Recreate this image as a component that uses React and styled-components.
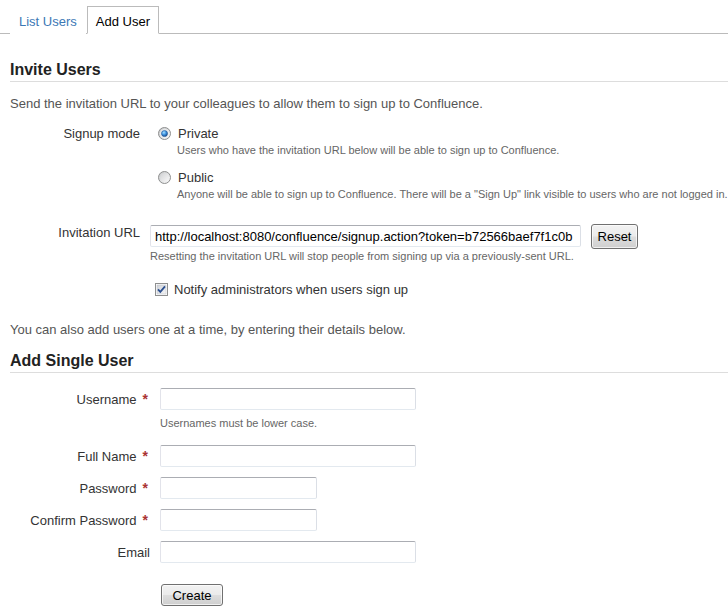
import React, { useId } from 'react';
import styled, { createGlobalStyle } from 'styled-components';

const Global = createGlobalStyle`
  html, body { margin: 0; padding: 0; background: #fff; }
  body {
    font-family: "Liberation Sans", Arial, sans-serif;
    font-size: 13px;
    color: #333;
  }
`;

const Page = styled.div`
  width: 728px;
`;

const TabBar = styled.div`
  display: flex;
  align-items: flex-end;
  padding: 6px 0 0 10px;
  border-bottom: 1px solid #bbb;
`;

const Tab = styled.a`
  display: block;
  box-sizing: border-box;
  height: 28px;
  padding: 3px 8px 0;
  margin-bottom: -1px;
  margin-left: ${p => (p.$active ? '1px' : '0')};
  line-height: 23px;
  font-size: 13px;
  text-decoration: none;
  background: #fff;
  border: 1px solid ${p => (p.$active ? '#bbb' : 'transparent')};
  border-bottom-color: ${p => (p.$active ? '#fff' : 'transparent')};
  color: ${p => (p.$active ? '#000' : '#3c78b5')};
  cursor: pointer;
`;

const Content = styled.div`
  padding-left: 10px;
`;

const Heading = styled.h2`
  margin: ${p => p.$top}px 0 0;
  padding: 0 0 1px;
  font-size: 16px;
  line-height: 20px;
  font-weight: bold;
  color: #222;
  border-bottom: 1px solid #ddd;
`;

const Para = styled.p`
  margin: ${p => p.$top}px 0 0;
  line-height: 17px;
  color: #555;
`;

const Form = styled.div`
  margin-top: ${p => p.$top}px;
  display: flex;
  flex-direction: column;
  gap: ${p => p.$gap || 0}px;
`;

const Row = styled.div`
  display: grid;
  grid-template-columns: ${p => p.$label}px 1fr;
  column-gap: 10px;
  align-items: start;
  margin-top: ${p => p.$top || 0}px;
`;

const Label = styled.div`
  text-align: right;
  line-height: 17px;
  color: #333;
  padding-top: ${p => p.$pad || 0}px;
  white-space: nowrap;
`;

const Req = styled.span`
  display: inline-block;
  margin-left: 6px;
  padding-right: 2px;
  color: #a33;
  font-weight: bold;
  font-size: 14px;
`;

const Field = styled.div`
  display: flex;
  flex-direction: column;
  align-items: flex-start;
`;

const Option = styled.label`
  display: flex;
  align-items: flex-start;
  line-height: 17px;
  color: #333;
  margin-top: ${p => p.$top || 0}px;
  cursor: pointer;
  white-space: nowrap;
`;

const ControlIcon = styled.span`
  display: block;
  width: 13px;
  height: 13px;
  margin: 2px ${p => p.$gapRight}px 0 ${p => p.$left}px;
  svg { display: block; }
`;

const Desc = styled.div`
  font-size: 11px;
  line-height: 14px;
  color: #666;
  white-space: nowrap;
  margin-top: ${p => p.$top || 0}px;
  margin-bottom: ${p => p.$bottom || 0}px;
  padding-left: ${p => p.$indent || 0}px;
`;

const InlineField = styled.div`
  display: flex;
  align-items: flex-start;
`;

const TextInput = styled.input`
  box-sizing: border-box;
  width: ${p => p.$w}px;
  height: 22px;
  margin: ${p => p.$mt || 0}px 0 0;
  padding: 0 4px;
  font-family: "Liberation Sans", Arial, sans-serif;
  font-size: 13px;
  color: #000;
  background: #fff;
  border: 1px solid;
  border-color: #abadb3 #dbdfe6 #e3e9ef #e2e3ea;
  border-radius: 2px;
  outline: none;
`;

const Button = styled.button`
  box-sizing: border-box;
  width: ${p => p.$w}px;
  height: ${p => p.$h}px;
  margin: ${p => p.$mt || 0}px 0 0 ${p => p.$ml || 0}px;
  padding: 0;
  font-family: "Liberation Sans", Arial, sans-serif;
  font-size: 13px;
  color: #000;
  border: 1px solid #707070;
  border-radius: 3px;
  background: linear-gradient(#f2f2f2 0%, #ebebeb 48%, #dddddd 52%, #cfcfcf 100%);
  box-shadow: inset 0 0 0 1px rgba(255, 255, 255, 0.7);
  cursor: pointer;
`;

function Radio({ checked }) {
  const id = useId().replace(/:/g, '');
  return (
    <svg width="13" height="13" viewBox="0 0 13 13">
      <defs>
        <linearGradient id={`ring${id}`} x1="0" y1="0" x2="1" y2="1">
          <stop offset="0" stopColor="#c4c6c8" />
          <stop offset="1" stopColor="#fdfdfd" />
        </linearGradient>
        <linearGradient id={`in${id}`} x1="0" y1="0" x2="1" y2="1">
          <stop offset="0" stopColor="#d2d3d5" />
          <stop offset="1" stopColor="#f8f8f8" />
        </linearGradient>
        <radialGradient id={`dot${id}`} cx="0.4" cy="0.35" r="0.75">
          <stop offset="0" stopColor="#a6e0ff" />
          <stop offset="0.45" stopColor="#3f93e0" />
          <stop offset="1" stopColor="#0c3774" />
        </radialGradient>
      </defs>
      <circle cx="6.5" cy="6.5" r="6" fill={`url(#ring${id})`} stroke="#8e8f8f" strokeWidth="1" />
      <circle cx="6.5" cy="6.5" r="4.3" fill={checked ? '#f4f4f4' : `url(#in${id})`} />
      {checked && <circle cx="6.5" cy="6.5" r="3.1" fill={`url(#dot${id})`} stroke="#1b4e8e" strokeWidth="0.5" />}
    </svg>
  );
}

function Checkbox() {
  const id = useId().replace(/:/g, '');
  return (
    <svg width="13" height="13" viewBox="0 0 13 13">
      <defs>
        <linearGradient id={`cb${id}`} x1="0" y1="0" x2="1" y2="1">
          <stop offset="0" stopColor="#cfd2d7" />
          <stop offset="1" stopColor="#f7f7f8" />
        </linearGradient>
      </defs>
      <rect x="0.5" y="0.5" width="12" height="12" fill="#fff" stroke="#8e8f8f" />
      <rect x="2" y="2" width="9" height="9" fill={`url(#cb${id})`} stroke="#b8bdc4" strokeWidth="0.5" />
      <path d="M3 6.3 L5.3 8.8 L10 3.3" fill="none" stroke="#2b4f8f" strokeWidth="1.8" strokeLinejoin="miter" />
    </svg>
  );
}

export default function App() {
  return (
    <Page>
      <Global />
      <TabBar>
        <Tab>List Users</Tab>
        <Tab $active>Add User</Tab>
      </TabBar>
      <Content>
        <Heading $top={26}>Invite Users</Heading>
        <Para $top={13}>
          Send the invitation URL to your colleagues to allow them to sign up to Confluence.
        </Para>

        <Form $top={13}>
          <Row $label={130}>
            <Label>Signup mode</Label>
            <div>
              <Option>
                <ControlIcon $left={8} $gapRight={7}><Radio checked /></ControlIcon>
                Private
              </Option>
              <Desc $top={1} $indent={27}>
                Users who have the invitation URL below will be able to sign up to Confluence.
              </Desc>
              <Option $top={12}>
                <ControlIcon $left={8} $gapRight={7}><Radio /></ControlIcon>
                Public
              </Option>
              <Desc $top={1} $indent={27}>
                Anyone will be able to sign up to Confluence. There will be a "Sign Up" link visible to users who are not logged in.
              </Desc>
            </div>
          </Row>

          <Row $label={130} $top={23}>
            <Label>Invitation URL</Label>
            <Field>
              <InlineField>
                <TextInput
                  $w={431}
                  $mt={1}
                  readOnly
                  defaultValue="http://localhost:8080/confluence/signup.action?token=b72566baef7f1c0b"
                />
                <Button $w={47} $h={25} $ml={10}>Reset</Button>
              </InlineField>
              <Desc>Resetting the invitation URL will stop people from signing up via a previously-sent URL.</Desc>
            </Field>
          </Row>

          <Row $label={130} $top={18}>
            <div />
            <Option>
              <ControlIcon $left={5} $gapRight={6}><Checkbox /></ControlIcon>
              Notify administrators when users sign up
            </Option>
          </Row>
        </Form>

        <Para $top={23}>You can also add users one at a time, by entering their details below.</Para>

        <Heading $top={13}>Add Single User</Heading>

        <Form $top={15} $gap={10}>
          <Row $label={140}>
            <Label $pad={3}>Username<Req>*</Req></Label>
            <Field>
              <TextInput $w={256} />
              <Desc $top={6} $bottom={5}>Usernames must be lower case.</Desc>
            </Field>
          </Row>
          <Row $label={140}>
            <Label $pad={3}>Full Name<Req>*</Req></Label>
            <Field><TextInput $w={256} /></Field>
          </Row>
          <Row $label={140}>
            <Label $pad={3}>Password<Req>*</Req></Label>
            <Field><TextInput $w={157} type="password" /></Field>
          </Row>
          <Row $label={140}>
            <Label $pad={3}>Confirm Password<Req>*</Req></Label>
            <Field><TextInput $w={157} type="password" /></Field>
          </Row>
          <Row $label={140}>
            <Label $pad={3}>Email</Label>
            <Field><TextInput $w={256} /></Field>
          </Row>
          <Row $label={140}>
            <div />
            <Field>
              <Button $w={62} $h={22} $mt={11} $ml={1}>Create</Button>
            </Field>
          </Row>
        </Form>
      </Content>
    </Page>
  );
}
